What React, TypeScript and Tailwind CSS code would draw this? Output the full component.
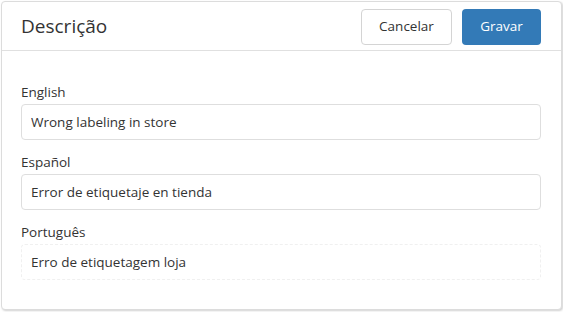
const fields = [
  { label: "English", value: "Wrong labeling in store", readOnly: false },
  { label: "Español", value: "Error de etiquetaje en tienda", readOnly: false },
  { label: "Português", value: "Erro de etiquetagem loja", readOnly: true },
];

export default function App() {
  return (
    <div className="bg-white h-[312px] pl-px pt-px font-['Open_Sans',sans-serif] text-[#333]">
      <div className="w-[561px] h-[309px] bg-white border border-[#dcdcdc] rounded-[4px] shadow-[1px_1px_2px_rgba(0,0,0,0.18)]">
        <div className="flex items-center justify-between h-[49px] pl-[19px] pr-[20px] border-b border-[#e0e0e0]">
          <h1 className="text-[19px] leading-7 text-[#333]">Descrição</h1>
          <div className="flex gap-[10px] pt-[1px]">
            <button
              type="button"
              className="w-[91px] h-[36px] rounded-[4px] border border-[#d4d4d4] bg-white text-[13.5px] text-[#333]"
            >
              Cancelar
            </button>
            <button
              type="button"
              className="w-[79px] h-[36px] rounded-[4px] bg-[#337ab7] text-[13.5px] text-white"
            >
              Gravar
            </button>
          </div>
        </div>
        <div className="flex flex-col gap-[12px] pt-[31px] pl-[19px] pr-[20px]">
          {fields.map((f) => (
            <div key={f.label} className="flex flex-col gap-[2px]">
              <label className="text-[13.5px] leading-5">{f.label}</label>
              <input
                readOnly
                value={f.value}
                className={
                  f.readOnly
                    ? "h-[36px] w-full rounded-[4px] border border-dashed border-[#f0f0f0] px-[9px] text-[13.5px] text-[#333] outline-none"
                    : "h-[36px] w-full rounded-[4px] border border-[#dedede] px-[9px] text-[13.5px] text-[#333] outline-none"
                }
              />
            </div>
          ))}
        </div>
      </div>
    </div>
  );
}
